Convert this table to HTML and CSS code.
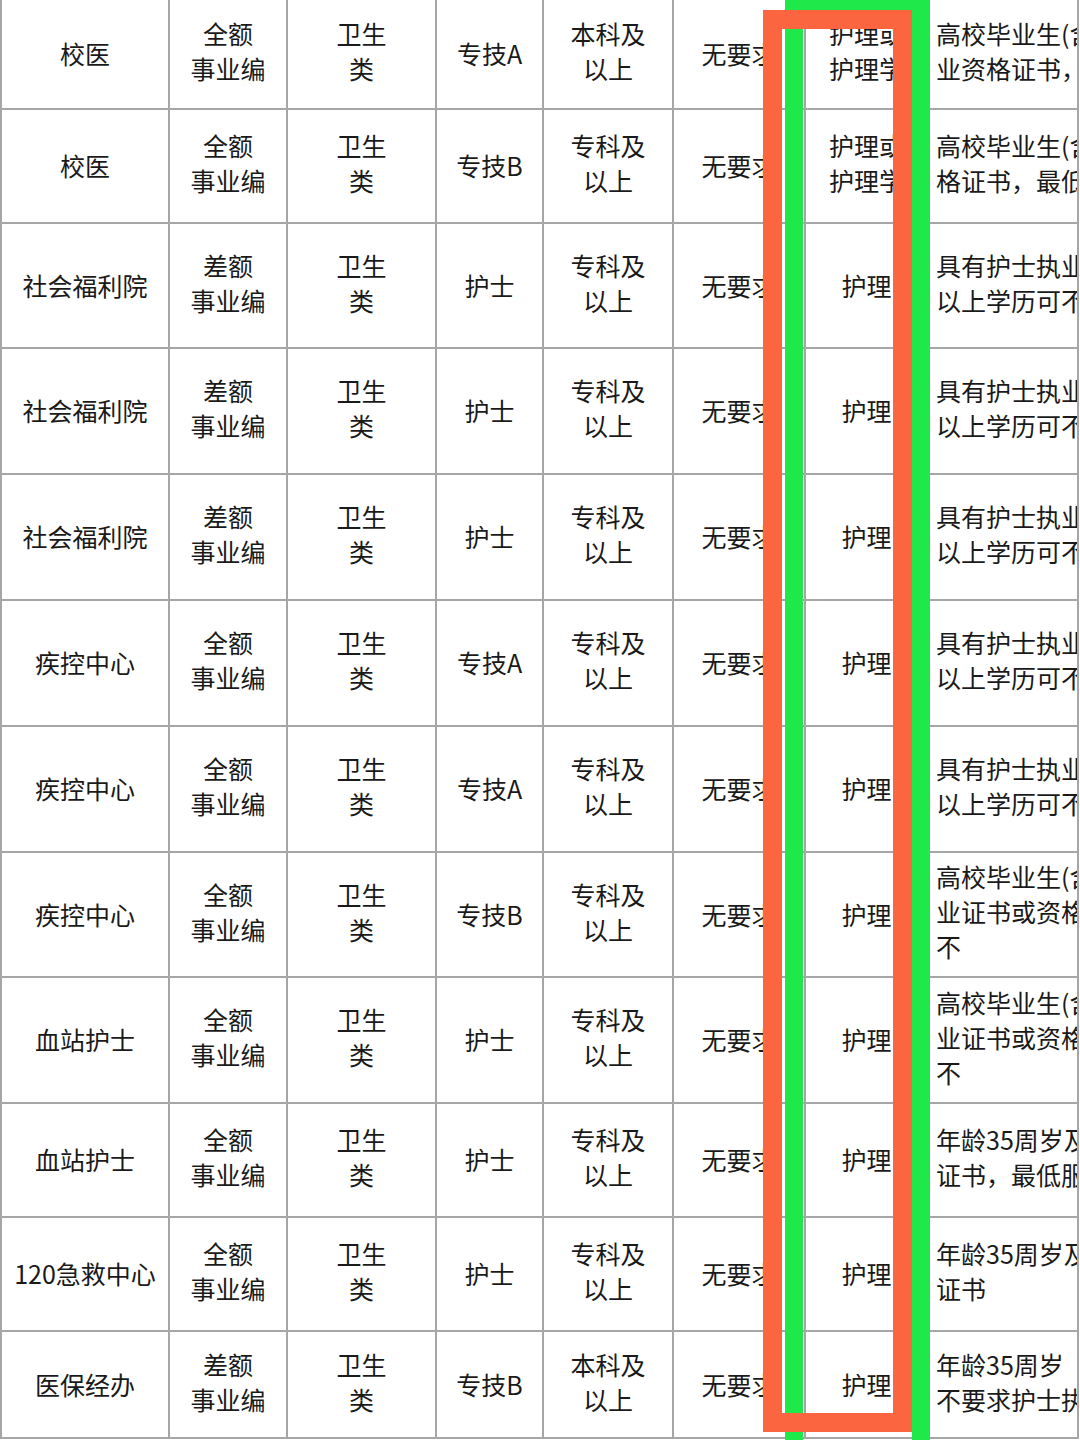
FILE: index.html
```html
<!DOCTYPE html>
<html lang="zh-CN">
<head>
<meta charset="utf-8">
<title>岗位表</title>
<link rel="stylesheet" href="styles.css">
</head>
<body>
<div class="sheet">
  <div class="table">
    <div class="row h110">
      <div class="cell">校医</div>
      <div class="cell stack">全额<br>事业编</div>
      <div class="cell stack">卫生<br>类</div>
      <div class="cell">专技A</div>
      <div class="cell stack">本科及<br>以上</div>
      <div class="cell">无要求</div>
      <div class="cell stack">护理或<br>护理学</div>
      <div class="cell note stack">高校毕业生(含应<br>业资格证书，须</div>
    </div>
    <div class="row h114">
      <div class="cell">校医</div>
      <div class="cell stack">全额<br>事业编</div>
      <div class="cell stack">卫生<br>类</div>
      <div class="cell">专技B</div>
      <div class="cell stack">专科及<br>以上</div>
      <div class="cell">无要求</div>
      <div class="cell stack">护理或<br>护理学</div>
      <div class="cell note stack">高校毕业生(含应<br>格证书，最低服</div>
    </div>
    <div class="row h125">
      <div class="cell">社会福利院</div>
      <div class="cell stack">差额<br>事业编</div>
      <div class="cell stack">卫生<br>类</div>
      <div class="cell">护士</div>
      <div class="cell stack">专科及<br>以上</div>
      <div class="cell">无要求</div>
      <div class="cell">护理</div>
      <div class="cell note stack">具有护士执业资<br>以上学历可不限</div>
    </div>
    <div class="row h126">
      <div class="cell">社会福利院</div>
      <div class="cell stack">差额<br>事业编</div>
      <div class="cell stack">卫生<br>类</div>
      <div class="cell">护士</div>
      <div class="cell stack">专科及<br>以上</div>
      <div class="cell">无要求</div>
      <div class="cell">护理</div>
      <div class="cell note stack">具有护士执业资<br>以上学历可不限</div>
    </div>
    <div class="row h126">
      <div class="cell">社会福利院</div>
      <div class="cell stack">差额<br>事业编</div>
      <div class="cell stack">卫生<br>类</div>
      <div class="cell">护士</div>
      <div class="cell stack">专科及<br>以上</div>
      <div class="cell">无要求</div>
      <div class="cell">护理</div>
      <div class="cell note stack">具有护士执业资<br>以上学历可不限</div>
    </div>
    <div class="row h126">
      <div class="cell">疾控中心</div>
      <div class="cell stack">全额<br>事业编</div>
      <div class="cell stack">卫生<br>类</div>
      <div class="cell">专技A</div>
      <div class="cell stack">专科及<br>以上</div>
      <div class="cell">无要求</div>
      <div class="cell">护理</div>
      <div class="cell note stack">具有护士执业资<br>以上学历可不限</div>
    </div>
    <div class="row h126">
      <div class="cell">疾控中心</div>
      <div class="cell stack">全额<br>事业编</div>
      <div class="cell stack">卫生<br>类</div>
      <div class="cell">专技A</div>
      <div class="cell stack">专科及<br>以上</div>
      <div class="cell">无要求</div>
      <div class="cell">护理</div>
      <div class="cell note stack">具有护士执业资<br>以上学历可不限</div>
    </div>
    <div class="row h125">
      <div class="cell">疾控中心</div>
      <div class="cell stack">全额<br>事业编</div>
      <div class="cell stack">卫生<br>类</div>
      <div class="cell">专技B</div>
      <div class="cell stack">专科及<br>以上</div>
      <div class="cell">无要求</div>
      <div class="cell">护理</div>
      <div class="cell note stack">高校毕业生(含应<br>业证书或资格证<br>不</div>
    </div>
    <div class="row h126">
      <div class="cell">血站护士</div>
      <div class="cell stack">全额<br>事业编</div>
      <div class="cell stack">卫生<br>类</div>
      <div class="cell">护士</div>
      <div class="cell stack">专科及<br>以上</div>
      <div class="cell">无要求</div>
      <div class="cell">护理</div>
      <div class="cell note stack">高校毕业生(含应<br>业证书或资格证<br>不</div>
    </div>
    <div class="row h114">
      <div class="cell">血站护士</div>
      <div class="cell stack">全额<br>事业编</div>
      <div class="cell stack">卫生<br>类</div>
      <div class="cell">护士</div>
      <div class="cell stack">专科及<br>以上</div>
      <div class="cell">无要求</div>
      <div class="cell">护理</div>
      <div class="cell note stack">年龄35周岁及以<br>证书，最低服务</div>
    </div>
    <div class="row h114">
      <div class="cell">120急救中心</div>
      <div class="cell stack">全额<br>事业编</div>
      <div class="cell stack">卫生<br>类</div>
      <div class="cell">护士</div>
      <div class="cell stack">专科及<br>以上</div>
      <div class="cell">无要求</div>
      <div class="cell">护理</div>
      <div class="cell note stack">年龄35周岁及以<br>证书</div>
    </div>
    <div class="row h107">
      <div class="cell">医保经办</div>
      <div class="cell stack">差额<br>事业编</div>
      <div class="cell stack">卫生<br>类</div>
      <div class="cell">专技B</div>
      <div class="cell stack">本科及<br>以上</div>
      <div class="cell">无要求</div>
      <div class="cell">护理</div>
      <div class="cell note stack">年龄35周岁<br>不要求护士执业</div>
    </div>
  </div>
  <div class="mark mark-green"></div>
  <div class="mark mark-orange"></div>
</div>
</body>
</html>
```
FILE: styles.css
```css
html, body {
  margin: 0;
  padding: 0;
  background: #ffffff;
}

body {
  width: 1080px;
  height: 1440px;
  overflow: hidden;
  font-family: "Noto Sans CJK SC", "Noto Sans", sans-serif;
  color: #1a1a1a;
  font-size: 25px;
  line-height: 35px;
}

.sheet {
  position: relative;
  width: 1080px;
  height: 1440px;
  overflow: hidden;
}

.table {
  display: flex;
  flex-direction: column;
  width: 1079px;
}

.row {
  display: grid;
  grid-template-columns: 170px 118px 149px 107px 130px 132px 123px 150px;
  box-sizing: border-box;
  border-bottom: 2px solid #a6a6a6;
}

.h107 { height: 107px; }
.h110 { height: 110px; }
.h114 { height: 114px; }
.h125 { height: 125px; }
.h126 { height: 126px; }

.cell {
  box-sizing: border-box;
  border-right: 2px solid #a6a6a6;
  display: flex;
  align-items: center;
  justify-content: center;
  text-align: center;
  white-space: nowrap;
  overflow: hidden;
  padding-bottom: 1px;
}

.cell.stack {
  padding-bottom: 6px;
}

.cell:first-child {
  border-left: 2px solid #a6a6a6;
}

.cell.note {
  justify-content: flex-start;
  text-align: left;
  padding-left: 7px;
}

.mark {
  position: absolute;
  box-sizing: border-box;
  background: transparent;
}

.mark-green {
  left: 785px;
  top: -8px;
  width: 145px;
  height: 1470px;
  border: 18px solid #1fe84b;
}

.mark-orange {
  left: 763px;
  top: 10px;
  width: 149px;
  height: 1422px;
  border: 19px solid #fb6540;
}
```
